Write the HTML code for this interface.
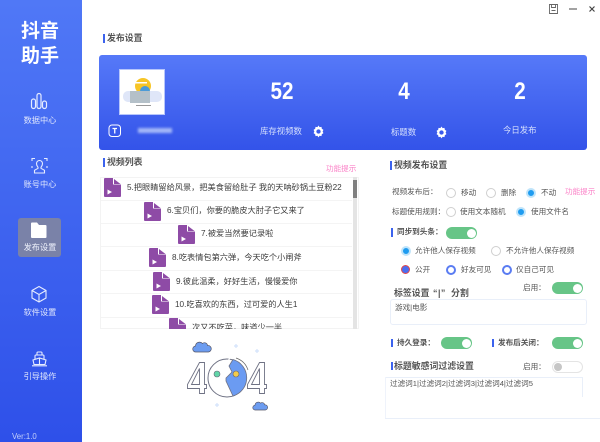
<!DOCTYPE html>
<html lang="zh"><head><meta charset="utf-8"><style>
html,body{margin:0;padding:0}
body{width:600px;height:442px;position:relative;overflow:hidden;background:#fff;font-family:"Liberation Sans","Noto Sans CJK SC",sans-serif;color:#555}
.a,.t{position:absolute;white-space:nowrap}
.t{font-size:7.6px;line-height:12px}
.l{font-size:8.4px;color:#d6e0fd}
.side{left:0;top:0;width:82px;height:442px;background:linear-gradient(#5078f6,#2e50e9)}
.nav{color:#dfe6fd;font-size:8.2px;width:80px;left:0;text-align:center;line-height:12px}
.bar{width:2px;background:#3c63ee}
.h{font-size:8.9px;font-weight:700;color:#555;line-height:12px}
.n{width:40px;text-align:center;color:#fff;font-size:24px;font-weight:700;line-height:28px;top:78px;transform:scaleX(.86)}
.r{width:8px;height:8px;border-radius:50%;border:1px solid #cfcfcf;background:#fff}
.s{width:6px;height:6px;border:2px solid #bfe4fa;border-radius:50%;background:#1f9cf0}
.b{width:6px;height:6px;border:2px solid #5a7cf2;border-radius:50%;background:#fff}
.sw{width:31px;height:12px;border-radius:6px;background:#67c587}
.sw:after{content:"";position:absolute;right:1.5px;top:1.5px;width:9px;height:9px;border-radius:50%;background:#fff}
.ti{font-size:8.2px;color:#3c3c3c;line-height:12px}
.fi{width:17px;height:19px}
.ln{position:absolute;left:1px;width:251px;height:1px;background:#f4f4f4}
</style></head><body>
<div class="a side"></div>
<div class="a" style="left:0;top:19px;width:80px;text-align:center;color:#fff;font-size:19px;font-weight:700;line-height:25px">抖音<br>助手</div>

<svg class="a" style="left:30px;top:92px" width="18" height="18" fill="none" stroke="#e6ecff" stroke-width="1.2"><rect x="1.5" y="7" width="4" height="9.5" rx="2"/><rect x="7" y="1.5" width="4" height="15" rx="2"/><rect x="12.5" y="9" width="4" height="7.5" rx="2"/></svg>
<div class="a nav" style="top:115px">数据中心</div>

<svg class="a" style="left:31px;top:157px" width="17" height="18" fill="none" stroke="#e6ecff" stroke-width="1.1"><path d="M1 4V1.5h3M13 1.5h3V4M1 9v2M16 9v2"/><path d="M5.500 6.500a3 3 0 0 1 6 0c0 2-1 3-1.500 3.800v1l3.500 2v2.700H3.500v-2.700l3.500-2v-1C6.500 9.500 5.500 8.500 5.500 6.500z"/></svg>
<div class="a nav" style="top:179px">账号中心</div>

<div class="a" style="left:18px;top:218px;width:43px;height:39px;background:#7a82a8;border-radius:3px"></div>
<svg class="a" style="left:30px;top:221px" width="18" height="18"><path d="M1 2.500a1 1 0 0 1 1-1h5l2 2.500h6.500a1 1 0 0 1 1 1V16a1 1 0 0 1-1 1H2a1 1 0 0 1-1-1z" fill="#fff"/></svg>
<div class="a nav" style="top:242px;color:#eef1fb">发布设置</div>

<svg class="a" style="left:30px;top:285px" width="18" height="18" fill="none" stroke="#e6ecff" stroke-width="1.1"><path d="M9 1.500l7 4v7.500l-7 4-7-4V5.500zM2 5.500l7 4 7-4M9 9.500v7.500"/></svg>
<div class="a nav" style="top:307px">软件设置</div>

<svg class="a" style="left:31px;top:350px" width="17" height="18" fill="none" stroke="#e6ecff" stroke-width="1.1"><path d="M6 5V3a1 1 0 0 1 1-1h3a1 1 0 0 1 1 1v2M4 9V6a1 1 0 0 1 1-1h7a1 1 0 0 1 1 1v3M2 10l6.500-2 6.500 2-1 4.500H3zM8.500 8v6.500M1 15.800h15"/></svg>
<div class="a nav" style="top:371px">引导操作</div>
<div class="a" style="left:12px;top:432px;color:#c4d0fa;font-size:7.800px;line-height:10px">Ver:1.0</div>

<svg class="a" style="left:548px;top:3px" width="50" height="12" fill="none" stroke="#666"><path d="M1.500 1.500h8v9h-8zM3.500 1.500v3h4v-3M3.500 7.500h4" stroke-width=".9"/><path d="M21 6h8" stroke="#555" stroke-width="1.100"/><path d="M41.500 3.500l5 5M46.500 3.500l-5 5" stroke="#444" stroke-width="1.200"/></svg>

<div class="a bar" style="left:103px;top:34px;height:9px"></div>
<div class="a h" style="left:107px;top:32px">发布设置</div>

<div class="a" style="left:99px;top:55px;width:488px;height:95px;border-radius:3px;background:linear-gradient(#5679f8,#3353e9)"></div>
<div class="a" style="left:119px;top:69px;width:46px;height:46px;background:#fff;border:1px solid #b7c6fb;box-sizing:border-box"></div>
<svg class="a" style="left:121px;top:71px" width="42" height="42"><circle cx="22" cy="15" r="8" fill="#f7c526"/><rect x="14" y="11" width="12" height="1.500" fill="#fff"/><rect x="2" y="20" width="39" height="11" rx="5" fill="#dfe6f8"/><circle cx="24" cy="20" r="5" fill="#4b9bd8"/><rect x="9" y="20" width="20" height="12" fill="#b4c0c8"/><rect x="15" y="34" width="15" height="1" fill="#999"/></svg>
<svg class="a" style="left:108px;top:124px" width="14" height="14" fill="none" stroke="#fff" stroke-width="1"><rect x="1" y="1" width="11.500" height="11.500" rx="3"/><path d="M4.500 4.500h4.500M6.750 4.500v5" stroke-width="1.300"/></svg>
<div class="a" style="left:138px;top:128px;width:34px;height:5px;background:#a4b7f8;filter:blur(1.200px)"></div>

<div class="a n" style="left:262px">52</div>
<div class="a n" style="left:384px">4</div>
<div class="a n" style="left:500px">2</div>
<div class="t l" style="left:260px;top:125px">库存视频数</div>
<div class="t l" style="left:391px;top:126px">标题数</div>
<div class="t l" style="left:503px;top:124px">今日发布</div>
<svg class="a" style="left:312px;top:125px" width="13" height="13" viewBox="0 0 24 24"><path fill="#fff" fill-rule="evenodd" d="M12 1l2 3 3.500-.6.600 3.500 3 2-1.500 3.100 1.500 3-3 2-.6 3.500-3.500-.6-2 3-2-3-3.500.6-.6-3.500-3-2 1.500-3-1.500-3.100 3-2 .6-3.500 3.500.6zM12 8a4 4 0 1 0 0 8 4 4 0 0 0 0-8z"/></svg>
<svg class="a" style="left:435px;top:126px" width="13" height="13" viewBox="0 0 24 24"><path fill="#fff" fill-rule="evenodd" d="M12 1l2 3 3.500-.6.600 3.500 3 2-1.500 3.100 1.500 3-3 2-.6 3.500-3.500-.6-2 3-2-3-3.500.6-.6-3.500-3-2 1.500-3-1.500-3.100 3-2 .6-3.500 3.500.6zM12 8a4 4 0 1 0 0 8 4 4 0 0 0 0-8z"/></svg>

<div class="a bar" style="left:103px;top:158px;height:9px"></div>
<div class="a h" style="left:107px;top:156px">视频列表</div>
<div class="t" style="left:326px;top:163px;color:#fb83c8">功能提示</div>

<div class="a" style="left:100px;top:177px;width:259px;height:152px;overflow:hidden;box-shadow:inset 0 0 0 1px #f3f3f3">
<svg width="0" height="0" style="position:absolute"><defs><symbol id="f" viewBox="0 0 17 19"><path d="M1 0h8v6.500h8V18a1 1 0 0 1-1 1H1a1 1 0 0 1-1-1V1a1 1 0 0 1 1-1z" fill="#8e4ba6"/><path d="M10 1l6.500 5H10z" fill="#8e4ba6"/><path d="M3.500 11.500l4.500 2.500-4.500 2.500z" fill="#fff"/></symbol></defs></svg>
<svg class="a fi" style="left:4px;top:1px"><use href="#f"/></svg>
<div class="a ti" style="left:27px;top:5px">5.把眼睛留给风景，把美食留给肚子 我的天呐砂锅土豆粉22</div>
<svg class="a fi" style="left:44px;top:25px"><use href="#f"/></svg>
<div class="a ti" style="left:67px;top:28px">6.宝贝们，你要的脆皮大肘子它又来了</div>
<svg class="a fi" style="left:78px;top:48px"><use href="#f"/></svg>
<div class="a ti" style="left:101px;top:51px">7.被爱当然要记录啦</div>
<svg class="a fi" style="left:49px;top:71px"><use href="#f"/></svg>
<div class="a ti" style="left:72px;top:75px">8.吃表情包第六弹，今天吃个小闸斧</div>
<svg class="a fi" style="left:53px;top:95px"><use href="#f"/></svg>
<div class="a ti" style="left:76px;top:99px">9.彼此温柔，好好生活，慢慢爱你</div>
<svg class="a fi" style="left:52px;top:118px"><use href="#f"/></svg>
<div class="a ti" style="left:75px;top:122px">10.吃喜欢的东西，过可爱的人生1</div>
<svg class="a fi" style="left:69px;top:141px"><use href="#f"/></svg>
<div class="a ti" style="left:92px;top:145px">次又不吃菜，味道少一半</div>
<div class="ln" style="top:23px"></div>
<div class="ln" style="top:46px"></div>
<div class="ln" style="top:69px"></div>
<div class="ln" style="top:93px"></div>
<div class="ln" style="top:116px"></div>
<div class="ln" style="top:140px"></div>
<div class="a" style="left:253px;top:0;width:4px;height:152px;background:#e4e4e4"></div>
<div class="a" style="left:253px;top:3px;width:4px;height:18px;background:#808080"></div>
</div>

<svg class="a" style="left:180px;top:338px" width="90" height="76" fill="none">
<path d="M3 10a3 3 0 0 1-.5-6 4 4 0 0 1 7-2.500 3 3 0 0 1 5 2 3 3 0 0 1 1 6.500z" transform="translate(13,4)" fill="#6c9cf0" stroke="#556" stroke-width=".7"/>
<path d="M3 10a3 3 0 0 1-.5-6 4 4 0 0 1 7-2.500 3 3 0 0 1 5 2 3 3 0 0 1 1 6.500z" transform="translate(73,64) scale(.8)" fill="#6c9cf0" stroke="#556" stroke-width=".8"/>
<path fill-rule="evenodd" d="M12 0h5v22h2v4h-2v5h-5v-5H0v-4zM12 6L4 22h8z" transform="translate(7.500,24.500)" stroke="#6f7284" stroke-width=".9" fill="#fff"/>
<path fill-rule="evenodd" d="M12 0h5v22h2v4h-2v5h-5v-5H0v-4zM12 6L4 22h8z" transform="translate(67.500,24.500)" stroke="#6f7284" stroke-width=".9" fill="#fff"/>
<circle cx="47" cy="40" r="19" stroke="#6f7284" stroke-width="1" fill="#fff"/>
<path d="M53 21.500A19 19 0 0 1 53 58L46 43V40L52 34 49 28z" fill="#6b9bf2" stroke="#6f7284" stroke-width=".8"/>
<path d="M50 20l-5 7 3 6-6 6" stroke="#fff" stroke-width="1.200"/>
<circle cx="37" cy="36" r="3" fill="#62d6a8" stroke="#667" stroke-width=".6"/>
<circle cx="56" cy="36" r="3" fill="#f3cb4a" stroke="#667" stroke-width=".6"/>
<path d="M56 20c6 2 10 6 12 12" stroke="#666" stroke-width=".7"/>
<path d="M54 8h4M56 6v4M75 13h4M77 11v4M35 67h4M37 65v4" stroke="#d4e3fb" stroke-width="1.200"/>
</svg>

<div class="a bar" style="left:390px;top:161px;height:9px"></div>
<div class="a h" style="left:394px;top:159px">视频发布设置</div>

<div class="t" style="left:392px;top:186px">视频发布后：</div>
<div class="a r" style="left:446px;top:188px"></div><div class="t" style="left:461px;top:187px">移动</div>
<div class="a r" style="left:486px;top:188px"></div><div class="t" style="left:501px;top:187px">删除</div>
<div class="a s" style="left:526px;top:188px"></div><div class="t" style="left:541px;top:187px">不动</div>
<div class="t" style="left:565px;top:186px;color:#fb83c8">功能提示</div>

<div class="t" style="left:392px;top:206px">标题使用规则：</div>
<div class="a r" style="left:446px;top:207px"></div><div class="t" style="left:460px;top:206px">使用文本随机</div>
<div class="a s" style="left:516px;top:207px"></div><div class="t" style="left:531px;top:206px">使用文件名</div>

<div class="a bar" style="left:391px;top:228px;height:9px"></div>
<div class="t" style="left:397px;top:226px;font-weight:700">同步到头条：</div>
<div class="a sw" style="left:446px;top:227px"></div>

<div class="a s" style="left:401px;top:246px"></div><div class="t" style="left:415px;top:245px">允许他人保存视频</div>
<div class="a r" style="left:491px;top:246px"></div><div class="t" style="left:506px;top:245px">不允许他人保存视频</div>

<div class="a" style="left:401px;top:265px;width:7px;height:7px;border:1.500px solid #e0474c;border-radius:50%;background:#4a6ef0"></div><div class="t" style="left:415px;top:264px">公开</div>
<div class="a b" style="left:446px;top:265px"></div><div class="t" style="left:461px;top:264px">好友可见</div>
<div class="a b" style="left:502px;top:265px"></div><div class="t" style="left:516px;top:264px">仅自己可见</div>

<div class="a h" style="left:394px;top:287px">标签设置</div>
<div class="a h" style="left:433px;top:287px;letter-spacing:.5px">“|”</div>
<div class="a h" style="left:451px;top:287px">分割</div>
<div class="t" style="left:523px;top:282px">启用：</div>
<div class="a sw" style="left:552px;top:282px"></div>

<div class="a" style="left:390px;top:299px;width:197px;height:26px;border:1px solid #e9eff9;border-radius:3px;box-sizing:border-box"></div>
<div class="t" style="left:395px;top:302px">游戏|电影</div>

<div class="a bar" style="left:391px;top:339px;height:8px"></div>
<div class="t" style="left:397px;top:337px;font-weight:700">持久登录：</div>
<div class="a sw" style="left:441px;top:337px"></div>
<div class="a bar" style="left:492px;top:339px;height:8px"></div>
<div class="t" style="left:498px;top:337px;font-weight:700">发布后关闭：</div>
<div class="a sw" style="left:552px;top:337px"></div>

<div class="a bar" style="left:391px;top:362px;height:8px"></div>
<div class="a h" style="left:394px;top:360px">标题敏感词过滤设置</div>
<div class="t" style="left:523px;top:361px">启用：</div>
<div class="a" style="left:552px;top:361px;width:31px;height:12px;border-radius:6px;border:1px solid #e4e4e4;box-sizing:border-box;background:#fff"></div>
<div class="a" style="left:554px;top:363px;width:8px;height:8px;border-radius:50%;background:#c6c6c6"></div>

<div class="a" style="left:385px;top:377px;width:198px;height:1px;background:#e9eff9"></div>
<div class="a" style="left:385px;top:418px;width:215px;height:1px;background:#e9eff9"></div>
<div class="a" style="left:385px;top:377px;width:1px;height:41px;background:#eff3fb"></div>
<div class="a" style="left:582px;top:377px;width:1px;height:20px;background:#e9eff9"></div>
<div class="t" style="left:390px;top:378px">过滤词1|过滤词2|过滤词3|过滤词4|过滤词5</div>
</body></html>
